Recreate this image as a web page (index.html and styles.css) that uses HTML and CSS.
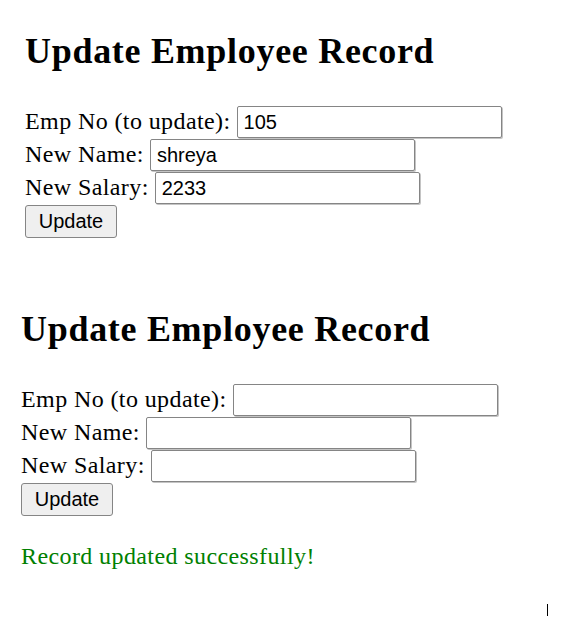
FILE: index.html
```html
<!DOCTYPE html>
<html lang="en">
<head>
<meta charset="utf-8">
<title>Update Employee Record</title>
<link rel="stylesheet" href="styles.css">
</head>
<body>
<section class="panel panel-first">
  <h2 class="title">Update Employee Record</h2>
  <form class="form">
    <div class="row"><label class="label">Emp No (to update):</label><input class="field" type="text" value="105"></div>
    <div class="row"><label class="label">New Name:</label><input class="field" type="text" value="shreya"></div>
    <div class="row"><label class="label">New Salary:</label><input class="field" type="text" value="2233"></div>
    <div class="row"><button class="btn" type="button">Update</button></div>
  </form>
</section>
<section class="panel panel-second">
  <h2 class="title">Update Employee Record</h2>
  <form class="form">
    <div class="row"><label class="label">Emp No (to update):</label><input class="field" type="text" value=""></div>
    <div class="row"><label class="label">New Name:</label><input class="field" type="text" value=""></div>
    <div class="row"><label class="label">New Salary:</label><input class="field" type="text" value=""></div>
    <div class="row"><button class="btn" type="button">Update</button></div>
  </form>
  <p class="message">Record updated successfully!</p>
</section>
<span class="cursor"></span>
</body>
</html>
```
FILE: styles.css
```css
html, body {
  margin: 0;
  padding: 0;
  background: #ffffff;
}
body {
  position: relative;
  width: 563px;
  height: 617px;
  overflow: hidden;
  font-family: "Liberation Serif", "Times New Roman", serif;
  color: #000;
}
.panel-first {
  padding: 30px 0 0 25px;
}
.panel-second {
  padding: 70px 0 0 21px;
}
.title {
  margin: 0;
  font-size: 36px;
  line-height: 42px;
  font-weight: bold;
  letter-spacing: 0.7px;
}
.form {
  display: flex;
  flex-direction: column;
  gap: 1px;
  margin: 34px 0 0 0;
}
.row {
  display: flex;
  align-items: baseline;
  gap: 6px;
}
.label {
  font-size: 24px;
  letter-spacing: 0.4px;
  line-height: 28px;
}
.field {
  box-sizing: border-box;
  width: 265px;
  height: 32px;
  margin: 0;
  padding: 0 6px;
  border: 1px solid #858585;
  border-radius: 2px;
  box-shadow: 1px 1px 0 #c4c4c4;
  font-family: "Liberation Sans", Arial, sans-serif;
  font-size: 20px;
  color: #000;
  background: #fff;
}
.btn {
  box-sizing: border-box;
  width: 92px;
  height: 33px;
  margin: 0;
  padding: 0;
  border: 1px solid #858585;
  border-radius: 3px;
  background: #efefef;
  font-family: "Liberation Sans", Arial, sans-serif;
  font-size: 20px;
  color: #000;
}
.message {
  margin: 26px 0 0 0;
  font-size: 24px;
  line-height: 28px;
  letter-spacing: 0.4px;
  color: #008000;
}
.cursor {
  position: absolute;
  left: 547px;
  top: 604px;
  width: 1px;
  height: 12px;
  background: #000;
}
```
